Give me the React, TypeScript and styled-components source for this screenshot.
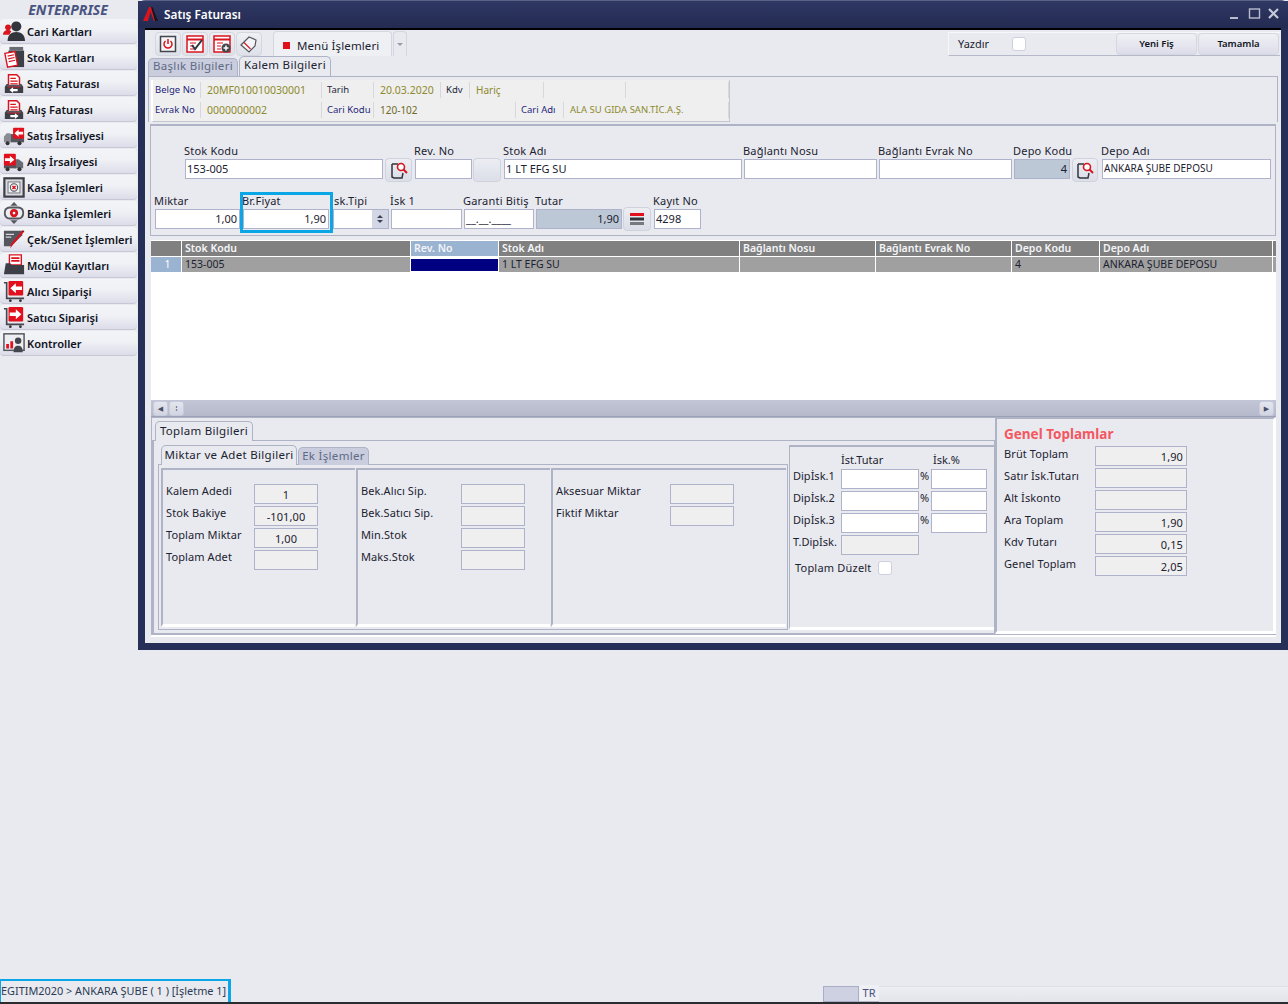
import React from "react";
import styled, { createGlobalStyle } from "styled-components";

const Global = createGlobalStyle`
  html, body { margin: 0; padding: 0; height: 100%; background: #e8eaef; }
  body { font-family: "Noto Sans", "DejaVu Sans", sans-serif; font-size: 11px; color: #1c2230; overflow: hidden; }
  * { box-sizing: border-box; }
`;

const Page = styled.div`
  width: 1288px;
  height: 1004px;
  display: flex;
  flex-direction: column;
`;

const Desk = styled.div`
  display: flex;
  align-items: flex-start;
  height: 979px;
`;

const Side = styled.nav`
  width: 138px;
  flex: none;
`;

const Brand = styled.div`
  height: 19px;
  line-height: 20px;
  text-align: center;
  font-size: 14px;
  font-weight: 700;
  font-style: italic;
  color: #4a5480;
  padding-right: 2px;
`;

const MenuItem = styled.div`
  width: 137px;
  height: 25px;
  margin-bottom: 1px;
  display: flex;
  align-items: center;
  gap: 2px;
  padding-left: 3px;
  border-radius: 4px;
  background: linear-gradient(#f3f4f8, #f0f1f5 45%, #dcdde9);
  border-bottom: 1px solid #c6c8d6;
  font-size: 11.1px;
  font-weight: 600;
  color: #11141e;
  white-space: nowrap;
  svg { flex: none; }
`;

const Win = styled.section`
  width: 1150px;
  height: 650px;
  flex: none;
  display: flex;
  flex-direction: column;
  background: #262f58;
  border-radius: 7px 7px 0 0;
  border-top: 1px solid #5a6288;
  padding: 0 7px 7px;
`;

const TitleBar = styled.header`
  height: 27px;
  flex: none;
  display: flex;
  align-items: center;
  gap: 6px;
  color: #fff;
  font-size: 11.8px;
  font-weight: 600;
  background: linear-gradient(#2f3864, #232b52);
  margin: 0 -7px;
  padding: 0 8px 2px 4px;
  span { flex: 1; }
`;

const WinCtl = styled.div`
  display: flex;
  align-items: center;
  gap: 6px;
`;

const WinBody = styled.div`
  flex: 1;
  background: #e8eaef;
  border-top: 2px solid #000;
  display: flex;
  flex-direction: column;
  min-height: 0;
`;

const Toolbar = styled.div`
  height: 26px;
  flex: none;
  display: flex;
  align-items: center;
  padding: 1px 1px 0 10px;
`;

const IconBtn = styled.button`
  width: 26px;
  height: 24px;
  padding: 0;
  margin-right: 1px;
  display: flex;
  align-items: center;
  justify-content: center;
  background: linear-gradient(#eef0f4, #dfe1ea);
  border: 1px solid #d4d6e0;
  border-radius: 4px;
`;

const MenuBtn = styled.div`
  margin-left: 10px;
  width: 119px;
  height: 25px;
  display: flex;
  align-items: center;
  gap: 7px;
  padding: 2px 0 0 9px;
  border: 1px solid #d4d6e0;
  border-bottom: none;
  border-radius: 4px 4px 0 0;
  background: #eef0f4;
  font-size: 11.5px;
  letter-spacing: 0.1px;
  i { width: 7px; height: 7px; background: #e0101c; }
`;

const MenuArrow = styled.div`
  width: 14px;
  height: 25px;
  margin-left: 1px;
  border: 1px solid #d4d6e0;
  border-bottom: none;
  border-radius: 4px 4px 0 0;
  display: flex;
  align-items: center;
  justify-content: center;
  &::after {
    content: "";
    border: 3px solid transparent;
    border-top: 3px solid #9a9ca8;
    margin-top: 3px;
  }
`;

const PrintBar = styled.div`
  margin-left: auto;
  width: 332px;
  height: 24px;
  display: flex;
  align-items: center;
  padding-left: 9px;
  border-top: 1px solid #f6f7fa;
  border-left: 1px solid #f6f7fa;
  border-bottom: 1px solid #b5b9c9;
`;

const Check = styled.span`
  width: 14px;
  height: 14px;
  display: block;
  flex: none;
  background: #fff;
  border: 1px solid #cdd0de;
  border-radius: 3px;
`;

const PrintCheck = styled(Check)`
  margin-left: 23px;
  margin-right: auto;
`;

const FisBtn = styled.button`
  width: 81px;
  height: 22px;
  margin-right: 1px;
  font: 600 9.5px "Noto Sans", sans-serif;
  color: #11141e;
  background: linear-gradient(#f0f1f5, #dcdde9);
  border: 1px solid #d4d6e0;
  border-radius: 4px;
`;

const TabRow = styled.div<{ $pad: number }>`
  display: flex;
  align-items: flex-end;
  gap: 1px;
  padding-left: ${(p) => p.$pad}px;
  flex: none;
`;

const Tab = styled.div<{ $w: number; $on?: boolean; $lh?: number }>`
  width: ${(p) => p.$w}px;
  height: ${(p) => (p.$on ? 20 : 18)}px;
  line-height: ${(p) => p.$lh || (p.$on ? 16 : 14)}px;
  text-align: center;
  font-size: 11.5px;
  letter-spacing: 0.3px;
  white-space: nowrap;
  border: 1px solid #aeb3c6;
  border-bottom: none;
  border-radius: 5px 5px 0 0;
  background: ${(p) => (p.$on ? "#e8eaef" : "#c9cddd")};
  color: ${(p) => (p.$on ? "#1c2230" : "#5f6a86")};
  position: relative;
  z-index: 1;
  margin-bottom: -1px;
`;

const InfoFrame = styled.div`
  height: 46px;
  flex: none;
  margin: 1px 3px 0;
  padding: 3px 0 0 2px;
  border: 1px solid #aeb3c6;
  border-bottom: none;
`;

const InfoGrid = styled.div`
  width: 579px;
  height: 42px;
  background: #efefef;
  border-right: 1px solid #c4c6d0;
  border-bottom: 1px solid #c4c6d0;
  border-left: 2px solid #fff;
  padding-bottom: 1px;
`;

const InfoRow = styled.div<{ $cols: string }>`
  height: 20px;
  display: grid;
  grid-template-columns: ${(p) => p.$cols};
  align-items: center;
`;

const InfoCell = styled.div`
  height: 16px;
  line-height: 16px;
  white-space: nowrap;
  border-right: 1px solid #d8d8dc;
`;

const InfoLabel = styled(InfoCell)<{ $pl?: number; $c?: string }>`
  color: ${(p) => p.$c || "#1f1f7a"};
  padding-left: ${(p) => p.$pl ?? 5}px;
  font-size: 9.5px;
`;

const InfoValue = styled(InfoCell)<{ $c?: string; $fs?: number }>`
  color: ${(p) => p.$c || "#8d8a2e"};
  padding-left: 6px;
  font-size: ${(p) => p.$fs || 10.5}px;
`;

const FormPanel = styled.div`
  height: 112px;
  flex: none;
  margin: 2px 5px 0;
  border: 1px solid #aeb3c6;
  border-top-width: 2px;
  display: flex;
  flex-direction: column;
  padding: 18px 0 0 4px;
`;

const FormRow = styled.div<{ $pad?: number; $top?: number }>`
  display: flex;
  align-items: flex-start;
  padding-left: ${(p) => p.$pad || 0}px;
  margin-top: ${(p) => p.$top || 0}px;
`;

const Field = styled.div<{ $w: number; $ml?: number }>`
  width: ${(p) => p.$w}px;
  margin-left: ${(p) => p.$ml || 0}px;
  flex: none;
  position: relative;
`;

const FocusField = styled(Field)`
  &::after {
    content: "";
    position: absolute;
    left: -3px;
    right: -4px;
    top: -2px;
    bottom: -4px;
    border: 3px solid #0aa6e6;
    pointer-events: none;
  }
`;

const Label = styled.div<{ $x?: number }>`
  height: 15px;
  line-height: 14px;
  margin-left: ${(p) => p.$x ?? -1}px;
  font-size: 11px;
  letter-spacing: 0.2px;
  white-space: nowrap;
`;

const Input = styled.div<{ $right?: boolean; $bg?: string; $fs?: number }>`
  height: 20px;
  line-height: 17px;
  padding: 0 ${(p) => (p.$right ? 2 : 1)}px;
  font-size: ${(p) => p.$fs || 11}px;
  text-align: ${(p) => (p.$right ? "right" : "left")};
  background: ${(p) => p.$bg || "#fff"};
  border: 1px solid #aeb2ca;
  white-space: nowrap;
  overflow: hidden;
  position: relative;
`;

const Spin = styled.span`
  position: absolute;
  right: 0;
  top: 0;
  bottom: 0;
  width: 16px;
  background: #d3d6e4;
  display: flex;
  flex-direction: column;
  align-items: center;
  justify-content: center;
  gap: 2px;
  &::before {
    content: "";
    border: 3px solid transparent;
    border-top: none;
    border-bottom: 3px solid #3c4256;
  }
  &::after {
    content: "";
    border: 3px solid transparent;
    border-bottom: none;
    border-top: 3px solid #3c4256;
  }
`;

const SquareBtn = styled.div<{ $w: number; $h?: number; $ml?: number; $top?: number }>`
  width: ${(p) => p.$w}px;
  height: ${(p) => p.$h || 24}px;
  margin-left: ${(p) => p.$ml || 0}px;
  margin-top: ${(p) => p.$top ?? 14}px;
  flex: none;
  display: flex;
  align-items: center;
  justify-content: center;
  background: linear-gradient(#eceef3, #dcdee8);
  border: 1px solid #d0d2dd;
  border-radius: 4px;
`;

const Grid = styled.div`
  height: 177px;
  flex: none;
  margin: 4px 5px 0 6px;
  background: #fff;
  display: flex;
  flex-direction: column;
  border-top: 1px solid #fff;
`;

const GridRow = styled.div<{ $bg: string }>`
  display: grid;
  grid-template-columns: 30px 228px 87px 240px 135px 135px 87px 172px 1fr;
  gap: 1px;
  height: 16px;
  line-height: 15px;
  border-bottom: 1px solid #fff;
  background: #fff;
  font-size: 10.5px;
  & > div { background: ${(p) => p.$bg}; padding-left: 3px; white-space: nowrap; overflow: hidden; }
`;

const HeadCell = styled.div<{ $on?: boolean }>`
  font-weight: 600;
  color: #f4f5f8;
  ${(p) => (p.$on ? "background: #9ab3d1 !important;" : "")}
`;

const RowNo = styled.div`
  background: #9ab3d1 !important;
  color: #fff;
  text-align: center;
`;

const NavyCell = styled.div`
  background: #000080 !important;
  margin: 2px 0 1px;
`;

const GridFill = styled.div`
  flex: 1;
`;

const Scroll = styled.div`
  height: 17px;
  flex: none;
  display: flex;
  align-items: center;
  justify-content: space-between;
  padding: 0 2px;
  background: linear-gradient(#c2c6d6, #b5b9cb);
  border-bottom: 1px solid #9da1b5;
`;

const ScrollLeft = styled.div`
  display: flex;
  gap: 1px;
`;

const ScrollBtn = styled.div`
  width: 15px;
  height: 15px;
  display: flex;
  align-items: center;
  justify-content: center;
  color: #4a5064;
  font-size: 7px;
  background: linear-gradient(#e4e6ee, #d2d5e2);
  border: 1px solid #c8cbd9;
  border-radius: 3px;
`;

const Bottom = styled.div`
  height: 218px;
  flex: none;
  margin: 0 5px 0 6px;
  display: flex;
  border-bottom: 1px solid #aeb3c6;
  box-shadow: 0 2px 0 #fff;
`;

const BottomLeft = styled.div`
  width: 844px;
  flex: none;
  display: flex;
  flex-direction: column;
  padding-top: 3px;
  border-left: 1px solid #aeb3c6;
  border-top: 1px solid #aeb3c6;
`;

const TotalsPanel = styled.div`
  flex: 1;
  border: 1px solid #aeb3c6;
  border-left-width: 2px;
  display: flex;
  padding: 4px 0 3px 4px;
`;

const QtyCol = styled.div`
  width: 630px;
  flex: none;
  display: flex;
  flex-direction: column;
`;

const QtyBody = styled.div`
  flex: 1;
  border: 1px solid #aeb3c6;
  padding: 3px 0 2px 2px;
  display: flex;
  gap: 1px;
`;

const QtySection = styled.div<{ $w: number }>`
  width: ${(p) => p.$w}px;
  flex: none;
  border-top: 2px solid #aeb3c6;
  border-left: 2px solid #aeb3c6;
  border-bottom: 3px solid #fff;
  padding: 13px 0 0 3px;
  display: flex;
  flex-direction: column;
  gap: 1px;
`;

const ReadRow = styled.div<{ $lw: number }>`
  display: grid;
  grid-template-columns: ${(p) => p.$lw}px auto;
  justify-content: start;
  line-height: 15px;
  font-size: 11px;
  letter-spacing: 0.1px;
  white-space: nowrap;
`;

const ReadBox = styled.div<{ $w: number; $align?: string; $mt?: number }>`
  width: ${(p) => p.$w}px;
  height: 20px;
  margin-top: ${(p) => p.$mt || 0}px;
  line-height: 19px;
  padding: 0 3px;
  background: #efefef;
  border: 1px solid #aeb2ca;
  font-size: 11px;
  text-align: ${(p) => p.$align || "center"};
`;

const DipCol = styled.div`
  flex: 1;
  border-top: 2px solid #aeb3c6;
  border-left: 1px solid #aeb3c6;
  border-bottom: 3px solid #fff;
  margin-left: 1px;
  padding: 5px 0 0 3px;
  display: flex;
  flex-direction: column;
`;

const DipHead = styled.div`
  display: grid;
  grid-template-columns: 48px 92px auto;
  height: 17px;
  line-height: 15px;
`;

const DipRow = styled.div`
  display: grid;
  grid-template-columns: 48px 78px 12px 56px;
  height: 22px;
  line-height: 14px;
  white-space: nowrap;
`;

const DipEdit = styled(Input)`
  width: 78px;
`;

const DipRate = styled(Input)`
  width: 56px;
`;

const Percent = styled.span`
  padding-left: 1px;
`;

const FixRow = styled.div`
  display: flex;
  align-items: center;
  gap: 6px;
  padding: 3px 0 0 2px;
  letter-spacing: 0.2px;
`;

const GrandPanel = styled.div`
  flex: 1;
  border-top: 2px solid #aeb3c6;
  border-left: 2px solid #aeb3c6;
  border-right: 3px solid #fff;
  border-bottom: 3px solid #fff;
  padding: 5px 0 0 7px;
  display: flex;
  flex-direction: column;
  gap: 2px;
`;

const GrandTitle = styled.div`
  color: #f4575f;
  font-size: 13.5px;
  font-weight: 700;
  height: 19px;
  line-height: 20px;
  margin-bottom: 1px;
`;

const Footer = styled.footer`
  height: 25px;
  flex: none;
  display: flex;
  align-items: stretch;
  border-bottom: 2px solid #2c2c30;
`;

const Session = styled.div`
  width: 231px;
  flex: none;
  border: 2px solid #0aa6e6;
  border-left-width: 1px;
  border-right-width: 3px;
  border-bottom: none;
  line-height: 20px;
  font-size: 10.9px;
  white-space: nowrap;
  color: #2d3a55;
`;

const StatusBox = styled.div`
  width: 36px;
  height: 16px;
  flex: none;
  align-self: flex-end;
  margin-left: 592px;
  background: #ced1e2;
  border: 1px solid #a9aec8;
`;

const Lang = styled.div`
  width: 20px;
  height: 17px;
  flex: none;
  align-self: flex-end;
  line-height: 16px;
  text-align: center;
  font-size: 11px;
  color: #4a4f80;
  background: #eef0f4;
  border-bottom: 1px solid #b5b9c9;
`;

const StatusRest = styled.div`
  flex: 1;
  height: 16px;
  align-self: flex-end;
  background: linear-gradient(#eceef2, #e2e4ea);
  border-top: 1px solid #dfe1e7;
`;

const Ico: React.FC<{ children: React.ReactNode; s?: number }> = ({ children, s = 22 }) => (
  <svg width={s} height={s} viewBox="0 0 24 24">{children}</svg>
);

const Tray = () => (
  <>
    <path d="M4 13h16l2 3v7H2v-7z" fill="#3d3f47" />
    <path d="M6 3h9l3 3v10H6z" fill="#fff" stroke="#d8141f" strokeWidth="1.6" />
    <path d="M8 7h6M8 10h8M8 13h8" stroke="#d8141f" strokeWidth="1.5" />
    <path d="M4 14h16v2H4z" fill="#55575f" />
  </>
);

const Truck = () => (
  <>
    <path d="M8 11h15v9H8z" fill="#55575f" />
    <path d="M1 14l3-4h4v10H1z" fill="#8a8c94" />
    <circle cx="5" cy="21" r="2.2" fill="#333" />
    <circle cx="18" cy="21" r="2.2" fill="#333" />
  </>
);

const RedArrow: React.FC<{ left?: boolean; x: number; y: number; s: number }> = ({ left, x, y, s }) => (
  <g transform={`translate(${x} ${y}) scale(${s / 12})`}>
    <rect width="12" height="12" fill="#e2101c" rx="1" />
    <path d={left ? "M1.5 6L6 2v2.5h5v3H6V10z" : "M10.5 6L6 2v2.5H1v3h5V10z"} fill="#fff" />
  </g>
);

const Cart: React.FC<{ left?: boolean }> = ({ left }) => (
  <>
    <path d="M1 3h3v17h19" fill="none" stroke="#44464e" strokeWidth="1.8" />
    <circle cx="8" cy="22.5" r="1.5" fill="#333" />
    <circle cx="19" cy="22.5" r="1.5" fill="#333" />
    <RedArrow left={left} x={6} y={1} s={16} />
  </>
);

const icons: Record<string, React.ReactNode> = {
  person: (
    <>
      <circle cx="14.5" cy="7" r="5.5" fill="#33353c" />
      <path d="M5 23c0-7 4-10 9.500-10S24 16 24 23z" fill="#33353c" />
      <circle cx="5.500" cy="8" r="3.200" fill="#d8141f" />
      <path d="M0 16c0-3 2.500-5 5.500-5 1.500 0 2.500.5 3.500 1.200L7 16z" fill="#d8141f" />
    </>
  ),
  stock: (
    <>
      <path d="M7 1h15v4H7z" fill="#6a6c74" />
      <path d="M6 5h17v18H6z" fill="#3d3f47" />
      <path d="M2 8l11-2 3 15-11 2z" fill="#fff" stroke="#d8141f" strokeWidth="1.500" />
      <path d="M5 11l7-1.500M5.600 14l7-1.500M6.300 17l7-1.500" stroke="#d8141f" strokeWidth="1.300" />
    </>
  ),
  saleInv: (
    <>
      <Tray />
      <path d="M7 19.500l4-3v2h5v2.500h-5v2z" fill="#fff" />
    </>
  ),
  buyInv: (
    <>
      <Tray />
      <path d="M17 19.500l-4-3v2H8v2.500h5v2z" fill="#fff" />
    </>
  ),
  saleTruck: (
    <>
      <Truck />
      <RedArrow left x={11} y={4} s={12} />
    </>
  ),
  buyTruck: (
    <>
      <path d="M12 10h5l5 4v6H12z" fill="#6a6c74" />
      <path d="M1 14h13v6H1z" fill="#55575f" />
      <circle cx="5" cy="21" r="2.200" fill="#333" />
      <circle cx="18" cy="21" r="2.200" fill="#333" />
      <RedArrow x={1} y={4} s={13} />
    </>
  ),
  safe: (
    <>
      <rect x="1.500" y="2.500" width="21" height="20" fill="#d9dae0" stroke="#3d3f47" strokeWidth="2.400" />
      <rect x="5.500" y="6.500" width="13" height="12" fill="#f2f2f4" stroke="#6a6c74" strokeWidth="1" />
      <circle cx="12" cy="12.500" r="4" fill="#f2f2f4" stroke="#55575f" strokeWidth="1.200" />
      <path d="M10.300 10.800l3.400 3.400M13.700 10.800l-3.400 3.400" stroke="#d8141f" strokeWidth="1.600" />
    </>
  ),
  bank: (
    <>
      <path d="M12 0l4 4H8zM12 24l-4-4h8z" fill="#55575f" />
      <rect x="1" y="5" width="22" height="14" rx="6" fill="#55575f" />
      <rect x="3" y="7" width="18" height="10" rx="4.500" fill="#eceef2" />
      <circle cx="12" cy="12" r="4.500" fill="#d8141f" />
      <circle cx="12" cy="12" r="1.500" fill="#fff" />
    </>
  ),
  check: (
    <>
      <path d="M1 3h20v5L9 20H1z" fill="#55575f" />
      <path d="M3 7h9M3 10h6" stroke="#d9dae0" strokeWidth="1.300" />
      <path d="M23 4l-12 14-3 4 1-5L21 3z" fill="#e2101c" />
      <path d="M21 3l2 1" stroke="#8c0b12" strokeWidth="1.500" />
    </>
  ),
  folder: (
    <>
      <path d="M7 1h13v11H7z" fill="#fff" stroke="#d8141f" strokeWidth="1.500" />
      <path d="M9 4.500h9M9 7.500h9" stroke="#d8141f" strokeWidth="1.800" />
      <path d="M3 10h5l1.500 2H23v10H1z" fill="#3d3f47" />
    </>
  ),
  cartLeft: <Cart left />,
  cartRight: <Cart />,
  chart: (
    <>
      <rect x="1" y="2" width="22" height="18" fill="#eceef2" stroke="#55575f" strokeWidth="1.600" />
      <path d="M3.500 13h3v5h-3zM8 10h3v8H8z" fill="#e2101c" />
      <circle cx="16.500" cy="9.500" r="3.500" fill="#44464e" />
      <path d="M11.500 22c0-5 2-7 5-7s5 2 5 7z" fill="#44464e" />
    </>
  ),
};

const menu: [string, React.ReactNode][] = [
  ["person", "Cari Kartları"],
  ["stock", "Stok Kartları"],
  ["saleInv", "Satış Faturası"],
  ["buyInv", "Alış Faturası"],
  ["saleTruck", "Satış İrsaliyesi"],
  ["buyTruck", "Alış İrsaliyesi"],
  ["safe", "Kasa İşlemleri"],
  ["bank", "Banka İşlemleri"],
  ["check", "Çek/Senet İşlemleri"],
  ["folder", <>Mo<u>d</u>ül Kayıtları</>],
  ["cartLeft", "Alıcı Siparişi"],
  ["cartRight", "Satıcı Siparişi"],
  ["chart", "Kontroller"],
];

const LensIcon = () => (
  <svg width="20" height="20" viewBox="0 0 20 20">
    <path d="M3 4h6M3 4v13l2 1h8l1-5" fill="none" stroke="#33353c" strokeWidth="1.500" />
    <circle cx="12" cy="7" r="3.500" fill="#fff" stroke="#d8141f" strokeWidth="1.600" />
    <path d="M14.500 9.500l3.500 3.500" stroke="#d8141f" strokeWidth="2" />
  </svg>
);

const DocIcon: React.FC<{ children: React.ReactNode }> = ({ children }) => (
  <svg width="20" height="20" viewBox="0 0 20 20">
    <rect x="2" y="2" width="16" height="16" fill="#fff" stroke="#d8141f" strokeWidth="1.500" />
    <path d="M2 5.500h16" stroke="#d8141f" strokeWidth="2" />
    <path d="M5 9h6M5 12h4M5 15h4" stroke="#d8141f" strokeWidth="1.200" />
    {children}
  </svg>
);

const qtyA = [["Kalem Adedi", "1"], ["Stok Bakiye", "-101,00"], ["Toplam Miktar", "1,00"], ["Toplam Adet", ""]];
const qtyB = ["Bek.Alıcı Sip.", "Bek.Satıcı Sip.", "Min.Stok", "Maks.Stok"];
const qtyC = ["Aksesuar Miktar", "Fiktif Miktar"];
const grand = [
  ["Brüt Toplam", "1,90"],
  ["Satır İsk.Tutarı", ""],
  ["Alt İskonto", ""],
  ["Ara Toplam", "1,90"],
  ["Kdv Tutarı", "0,15"],
  ["Genel Toplam", "2,05"],
];
const heads = ["", "Stok Kodu", "Rev. No", "Stok Adı", "Bağlantı Nosu", "Bağlantı Evrak No", "Depo Kodu", "Depo Adı", ""];

const App: React.FC = () => {
  return (
    <Page>
      <Global />
      <Desk>
        <Side>
          <Brand>ENTERPRISE</Brand>
          {menu.map(([icon, text]) => (
            <MenuItem key={icon}>
              <Ico>{icons[icon]}</Ico>
              <span>{text}</span>
            </MenuItem>
          ))}
        </Side>
        <Win>
          <TitleBar>
            <svg width="16" height="16" viewBox="0 0 16 16">
              <path d="M1 15L7 1h3l5 14h-3L8.500 6 6 15z" fill="#d8141f" />
              <path d="M9 1h1.500L16 15h-3z" fill="#14161f" />
            </svg>
            <span>Satış Faturası</span>
            <WinCtl>
              <svg width="13" height="13" viewBox="0 0 13 13"><path d="M1 11h8" stroke="#b8bccb" strokeWidth="2" /></svg>
              <svg width="13" height="13" viewBox="0 0 13 13"><rect x="1.500" y="2" width="10" height="9" fill="none" stroke="#b8bccb" strokeWidth="1.400" /></svg>
              <svg width="13" height="13" viewBox="0 0 13 13"><path d="M2 2l9 9M11 2l-9 9" stroke="#c6cad8" strokeWidth="2.200" /></svg>
            </WinCtl>
          </TitleBar>
          <WinBody>
            <Toolbar>
              <IconBtn>
                <svg width="20" height="20" viewBox="0 0 20 20">
                  <rect x="2.500" y="2.500" width="15" height="15" fill="#f5f5f7" stroke="#44464e" strokeWidth="1.500" />
                  <path d="M7.500 7a4 4 0 1 0 5 0M10 5v5" fill="none" stroke="#d8141f" strokeWidth="1.500" />
                </svg>
              </IconBtn>
              <IconBtn>
                <DocIcon><path d="M7 11l3 4 7-9" fill="none" stroke="#33353c" strokeWidth="2" /></DocIcon>
              </IconBtn>
              <IconBtn>
                <DocIcon>
                  <circle cx="14" cy="14" r="4.500" fill="#44464e" />
                  <path d="M14 11.500v5M11.500 14h5" stroke="#fff" strokeWidth="1.500" />
                </DocIcon>
              </IconBtn>
              <IconBtn>
                <svg width="20" height="20" viewBox="0 0 20 20">
                  <path d="M2 11l8-8 7 3-1 6-6 6z" fill="#f5f5f7" stroke="#55575f" strokeWidth="1.200" />
                  <path d="M5 8.500l6.500 6.500" stroke="#d8141f" strokeWidth="1.100" />
                </svg>
              </IconBtn>
              <MenuBtn><i />Menü İşlemleri</MenuBtn>
              <MenuArrow />
              <PrintBar>
                Yazdır
                <PrintCheck />
                <FisBtn>Yeni Fiş</FisBtn>
                <FisBtn>Tamamla</FisBtn>
              </PrintBar>
            </Toolbar>
            <TabRow $pad={3}>
              <Tab $w={90}>Başlık Bilgileri</Tab>
              <Tab $w={92} $on>Kalem Bilgileri</Tab>
            </TabRow>
            <InfoFrame>
              <InfoGrid>
                <InfoRow $cols="48px 121px 52px 67px 29px 74px 82px 103px">
                  <InfoLabel $pl={2}>Belge No</InfoLabel>
                  <InfoValue>20MF010010030001</InfoValue>
                  <InfoLabel $c="#23283c">Tarih</InfoLabel>
                  <InfoValue>20.03.2020</InfoValue>
                  <InfoLabel $c="#23283c">Kdv</InfoLabel>
                  <InfoValue $fs={10}>Hariç</InfoValue>
                  <InfoValue />
                  <InfoValue />
                </InfoRow>
                <InfoRow $cols="48px 121px 52px 142px 48px 165px">
                  <InfoLabel $pl={2}>Evrak No</InfoLabel>
                  <InfoValue>0000000002</InfoValue>
                  <InfoLabel>Cari Kodu</InfoLabel>
                  <InfoValue $c="#6d6b2a" $fs={10}>120-102</InfoValue>
                  <InfoLabel>Cari Adı</InfoLabel>
                  <InfoValue $fs={9.5}>ALA SU GIDA SAN.TİC.A.Ş.</InfoValue>
                </InfoRow>
              </InfoGrid>
            </InfoFrame>
            <FormPanel>
              <FormRow $pad={30}>
                <Field $w={198}>
                  <Label>Stok Kodu</Label>
                  <Input>153-005</Input>
                </Field>
                <SquareBtn $w={27} $ml={2}><LensIcon /></SquareBtn>
                <Field $w={57} $ml={3}>
                  <Label>Rev. No</Label>
                  <Input />
                </Field>
                <SquareBtn $w={28} $ml={1} />
                <Field $w={238} $ml={3}>
                  <Label>Stok Adı</Label>
                  <Input>1 LT EFG SU</Input>
                </Field>
                <Field $w={133} $ml={2}>
                  <Label>Bağlantı Nosu</Label>
                  <Input />
                </Field>
                <Field $w={133} $ml={2}>
                  <Label>Bağlantı Evrak No</Label>
                  <Input />
                </Field>
                <Field $w={56} $ml={2}>
                  <Label>Depo Kodu</Label>
                  <Input $right $bg="#bcc8d6">4</Input>
                </Field>
                <SquareBtn $w={26} $ml={2}><LensIcon /></SquareBtn>
                <Field $w={169} $ml={4}>
                  <Label>Depo Adı</Label>
                  <Input $fs={10}>ANKARA ŞUBE DEPOSU</Input>
                </Field>
              </FormRow>
              <FormRow $top={12}>
                <Field $w={85}>
                  <Label>Miktar</Label>
                  <Input $right>1,00</Input>
                </Field>
                <FocusField $w={86} $ml={3}>
                  <Label>Br.Fiyat</Label>
                  <Input $right>1,90</Input>
                </FocusField>
                <Field $w={56} $ml={4}>
                  <Label $x={1}>sk.Tipi</Label>
                  <Input><Spin /></Input>
                </Field>
                <Field $w={71} $ml={2}>
                  <Label>İsk 1</Label>
                  <Input />
                </Field>
                <Field $w={70} $ml={2}>
                  <Label>Garanti Bitiş</Label>
                  <Input>__.__.____</Input>
                </Field>
                <Field $w={86} $ml={2}>
                  <Label>Tutar</Label>
                  <Input $right $bg="#bcc8d6">1,90</Input>
                </Field>
                <SquareBtn $w={28} $ml={1} $top={13}>
                  <svg width="16" height="14" viewBox="0 0 16 14">
                    <path d="M1 2.500h14" stroke="#e2101c" strokeWidth="3" />
                    <path d="M1 7h14" stroke="#33353c" strokeWidth="3" />
                    <path d="M1 11.500h14" stroke="#77797f" strokeWidth="3" />
                  </svg>
                </SquareBtn>
                <Field $w={47} $ml={3}>
                  <Label>Kayıt No</Label>
                  <Input>4298</Input>
                </Field>
              </FormRow>
            </FormPanel>
            <Grid>
              <GridRow $bg="#808080">
                {heads.map((h, i) => (
                  <HeadCell key={i} $on={i === 2}>{h}</HeadCell>
                ))}
              </GridRow>
              <GridRow $bg="#a0a0a0">
                <RowNo>1</RowNo>
                <div>153-005</div>
                <NavyCell />
                <div>1 LT EFG SU</div>
                <div />
                <div />
                <div>4</div>
                <div>ANKARA ŞUBE DEPOSU</div>
                <div />
              </GridRow>
              <GridFill />
              <Scroll>
                <ScrollLeft>
                  <ScrollBtn>◀</ScrollBtn>
                  <ScrollBtn>⁞</ScrollBtn>
                </ScrollLeft>
                <ScrollBtn>▶</ScrollBtn>
              </Scroll>
            </Grid>
            <Bottom>
              <BottomLeft>
                <TabRow $pad={3}>
                  <Tab $w={98} $on $lh={18}>Toplam Bilgileri</Tab>
                </TabRow>
                <TotalsPanel>
                  <QtyCol>
                    <TabRow $pad={3}>
                      <Tab $w={136} $on $lh={18}>Miktar ve Adet Bilgileri</Tab>
                      <Tab $w={71} $lh={15}>Ek İşlemler</Tab>
                    </TabRow>
                    <QtyBody>
                      <QtySection $w={194}>
                        {qtyA.map(([l, v]) => (
                          <ReadRow key={l} $lw={88}>
                            {l}
                            <ReadBox $w={64} $mt={1}>{v}</ReadBox>
                          </ReadRow>
                        ))}
                      </QtySection>
                      <QtySection $w={194}>
                        {qtyB.map((l) => (
                          <ReadRow key={l} $lw={100}>
                            {l}
                            <ReadBox $w={64} $mt={1} />
                          </ReadRow>
                        ))}
                      </QtySection>
                      <QtySection $w={235}>
                        {qtyC.map((l) => (
                          <ReadRow key={l} $lw={114}>
                            {l}
                            <ReadBox $w={64} $mt={1} />
                          </ReadRow>
                        ))}
                      </QtySection>
                    </QtyBody>
                  </QtyCol>
                  <DipCol>
                    <DipHead>
                      <span />
                      <span>İst.Tutar</span>
                      <span>İsk.%</span>
                    </DipHead>
                    {[1, 2, 3].map((n) => (
                      <DipRow key={n}>
                        <span>Dipİsk.{n}</span>
                        <DipEdit />
                        <Percent>%</Percent>
                        <DipRate />
                      </DipRow>
                    ))}
                    <DipRow>
                      <span>T.Dipİsk.</span>
                      <ReadBox $w={78} />
                    </DipRow>
                    <FixRow>
                      Toplam Düzelt
                      <Check />
                    </FixRow>
                  </DipCol>
                </TotalsPanel>
              </BottomLeft>
              <GrandPanel>
                <GrandTitle>Genel Toplamlar</GrandTitle>
                {grand.map(([l, v]) => (
                  <ReadRow key={l} $lw={91}>
                    {l}
                    <ReadBox $w={92} $align="right">{v}</ReadBox>
                  </ReadRow>
                ))}
              </GrandPanel>
            </Bottom>
          </WinBody>
        </Win>
      </Desk>
      <Footer>
        <Session>EGITIM2020 &gt; ANKARA ŞUBE ( 1 ) [İşletme 1]</Session>
        <StatusBox />
        <Lang>TR</Lang>
        <StatusRest />
      </Footer>
    </Page>
  );
};

export default App;
